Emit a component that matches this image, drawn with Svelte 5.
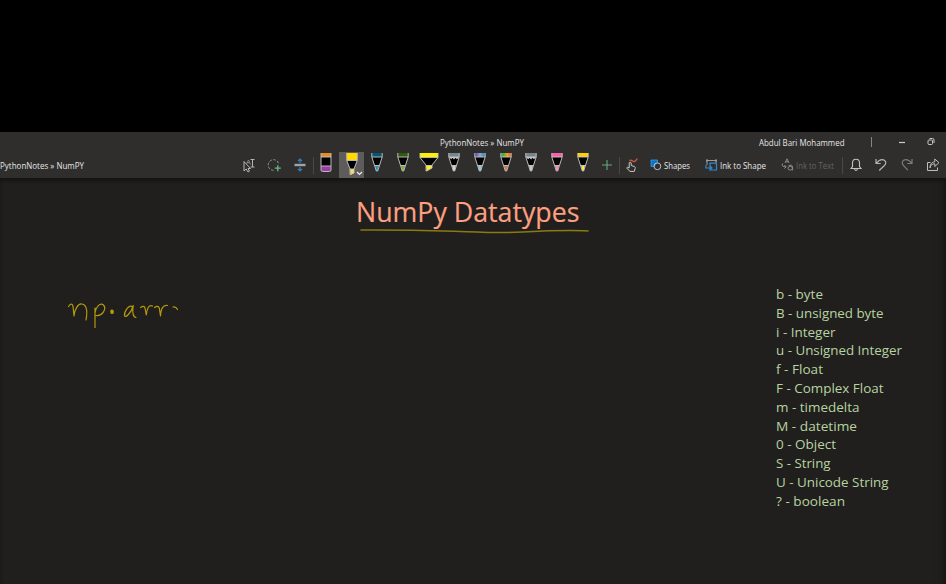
<script>
  const pens = [
    { kind: 'eraser' },
    { kind: 'marker', color: '#ffd800', tip: '#f3df46', selected: true },
    { kind: 'pen', color: '#075574', tip: '#2b95b5' },
    { kind: 'pen', color: '#30590a', tip: '#84ad35' },
    { kind: 'wide', color: '#fff000', tip: '#ffef20' },
    { kind: 'pencil', color: '#74858d', tip: '#d5d5d5' },
    { kind: 'pen', color: 'url(#galaxy)', tip: '#8acbd9' },
    { kind: 'pen', color: 'url(#rainbow)', tip: '#df7954' },
    { kind: 'pencil', color: '#74858d', tip: '#c2c8ca' },
    { kind: 'pen', color: '#fb5eaa', tip: '#ff86b8' },
    { kind: 'pen', color: '#ffd000', tip: '#ffe34b' }
  ];
  const types = [
    ['b - byte', 47], ['B - unsigned byte', 107.5], ['i - Integer', 59.5],
    ['u - Unsigned Integer', 126], ['f - Float', 47], ['F - Complex Float', 107.5],
    ['m - timedelta', 83.5], ['M - datetime', 81], ['0 - Object', 60],
    ['S - String', 54.5], ['U - Unicode String', 112.5], ['? - boolean', 69]
  ];
</script>

{#snippet label(text, width, height, baseline)}
  <svg class="label" {width} {height}><text x="0" y={baseline} textLength={width} lengthAdjust="spacingAndGlyphs">{text}</text></svg>
{/snippet}

{#snippet penIcon(pen)}
  <svg width="20" height="24" viewBox="0 0 20 24">
    {#if pen.kind === 'eraser'}
      <path d="M5 1H15V5H5Z" fill="#e98b23" /><path d="M5.2 5H14.8V14H5.2Z" fill="#000" />
      <path d="M5.2 14H14.8V18Q14.8 19.3 13.5 19.3H6.5Q5.2 19.3 5.2 18Z" fill="#9b3caa" />
      <path d="M5 1V18Q5 19.5 6.5 19.5H13.5Q15 19.5 15 18V1M5 5H15M5 14H15" class="outline" />
    {:else if pen.kind === 'marker'}
      <path d="M4.8 1H15.2V8H4.8Z" fill={pen.color} /><path d="M5 8.5H15L12 17H8Z" fill="#000" />
      <path d="M8 17H12V21L8.6 23Z" fill={pen.tip} />
      <path d="M4.8 1V8.5L8 17V22.5L12 21V17L15.2 8.5V1M5 8.5H15M8 17H12" class="outline" />
    {:else if pen.kind === 'wide'}
      <path d="M1 1H19V5H1Z" fill={pen.color} /><path d="M1.3 5.5H18.7L13 13H7Z" fill="#000" />
      <path d="M7 13.5H13V16L7.5 19.5Z" fill={pen.tip} />
      <path d="M1 1V5.5L7 13V19L13 16V13L19 5.5V1M1 5.5H19M7 13.5H13" class="outline" />
    {:else}
      <path d="M4.8 1H15.2V5H4.8Z" fill={pen.color} />
      <path d="M5 5H15L12 13.5H8Z" fill="#000" />
      {#if pen.kind === 'pencil'}
        <path d="M5 5L7.2 7.2L8.5 5.8L10 7.6L11.5 5.8L13 7.2L15 5Z" fill="#c8c8c8" />
      {/if}
      <path d="M8 13.5H12L10.6 19H9.4Z" fill={pen.tip} />
      <path d="M4.8 1V5L9.3 19H10.7L15.2 5V1M5 5H15M8 13.5H12" class="outline" />
    {/if}
  </svg>
{/snippet}

<main>
  <svg class="defs" width="0" height="0">
    <linearGradient id="galaxy"><stop offset="0" stop-color="#5c3a93" /><stop offset=".5" stop-color="#8ba5df" /><stop offset="1" stop-color="#297fa3" /></linearGradient>
    <linearGradient id="rainbow"><stop offset="0" stop-color="#289963" /><stop offset=".35" stop-color="#6fae34" /><stop offset=".65" stop-color="#f0a01c" /><stop offset="1" stop-color="#e45430" /></linearGradient>
  </svg>
  <header>
    <div class="titlebar">
      <div class="doc">{@render label('PythonNotes » NumPY', 84, 14, 10.4)}</div>
      <div class="user">{@render label('Abdul Bari Mohammed', 85.5, 14, 10.4)}</div>
      <i class="divider short"></i>
      <svg class="minimize" width="8" height="10"><path d="M1 5.5H7" stroke="#ccc" stroke-width="1.2" /></svg>
      <svg class="restore" width="10" height="10" fill="none" stroke="#c7c7c7"><rect x="2" y="3" width="4.5" height="4.5" rx="1" /><path d="M3.5 1.5H6.5Q8 1.5 8 3V6" /></svg>
    </div>
    <div class="toolbar">
      <div class="crumb">{@render label('PythonNotes » NumPY', 84, 14, 10.5)}</div>
      <div class="slot"><svg width="16" height="16" fill="none" stroke="#b5b5b5"><path d="M3 4.5V14L5.2 12L7 15L8.4 14.2L7 11.5H9.5Z" /><path d="M5.5 7L7.5 3L9.5 7.5M6.2 5.7H8.8" stroke="#858585" /><path d="M9.5 2.5H13.5M11.5 2.5V10M9.5 10H13.5" /></svg></div>
      <div class="slot"><svg width="16" height="16" fill="none"><circle cx="7.5" cy="8" r="5.3" stroke="#949494" stroke-dasharray="2.6 1.4" /><path d="M8 7H15.5V15H8Z" fill="#2f2e2d" /><path d="M11.8 8.2V14.2M8.8 11.2H14.8" stroke="#67bd82" stroke-width="1.3" /></svg></div>
      <div class="slot"><svg width="14" height="16" fill="none"><path d="M7 2V6M5 4L7 2L9 4M7 10V14M5 12L7 14L9 12" stroke="#2d80c6" stroke-width="1.2" /><path d="M1.5 8H12.5" stroke="#a2a2a2" stroke-width="2.4" /></svg></div>
      <i class="divider"></i>
      <div class="pens">
        {#each pens as pen}
          <div class="pen" class:selected={pen.selected}>
            {@render penIcon(pen)}
            {#if pen.selected}<svg class="chevron" width="7" height="5"><path d="M1 1L3.5 3.5L6 1" fill="none" stroke="#eee" stroke-width="1.2" /></svg>{/if}
          </div>
        {/each}
      </div>
      <div class="plus"><svg width="12" height="12"><path d="M6 1V11M1 6H11" stroke="#65a87c" stroke-width="1.1" /></svg></div>
      <i class="divider"></i>
      <div class="touch"><svg width="14" height="16" fill="none"><path d="M4.2 11V5.8Q5.2 4.5 6.2 5.8V8.5L9.5 9.5Q10.6 10 10.2 11.4L9.3 14.4H5L1.6 11Q2 9.5 4.2 11Z" stroke="#c9c9c9" /><path d="M4.5 3.8C6.5 1.4 7.5 5.4 9.8 4.4C12 3.4 10.5 2.4 12.5 1.9" stroke="#d95743" stroke-width="1.2" /></svg></div>
      <div class="command shapes">
        <svg width="12" height="14" fill="none"><path d="M1 2H7.5V5Q4.5 5.5 4.5 8.5H1Z" fill="#0875cc" stroke="#4a9ddd" stroke-width=".7" /><circle cx="7.4" cy="8.3" r="3.4" stroke="#b8c2ca" /></svg>
        {@render label('Shapes', 26, 14, 10.5)}
      </div>
      <div class="command ink-shape">
        <svg width="13" height="14" fill="none"><path d="M2 7V2.5H11V5" stroke="#999" /><path d="M1 1.5H3V3.5H1ZM10 1.5H12V3.5H10Z" fill="#999" /><path d="M5 5.2H11.5V12H5Z" stroke="#3987c6" stroke-width="1.2" /><path d="M.9 7V10H7M5 8L7 10L5 12" stroke="#2e85cf" stroke-width="1.2" /></svg>
        {@render label('Ink to Shape', 46, 14, 10.5)}
      </div>
      <div class="command ink-text">
        <svg width="13" height="14" fill="none" stroke="#8b8b8b"><path d="M4 5L6 .8L8 5M4.6 3.8H7.4M1.5 5.5Q0 9 5 8.8M3.4 7L5.2 8.8L3.4 10.6" /><ellipse cx="9.2" cy="10.2" rx="2.2" ry="1.9" /><path d="M7.7 7.4Q11.6 6.2 11.6 9V12.4" /></svg>
        {@render label('Ink to Text', 38, 14, 10.5)}
      </div>
      <i class="divider"></i>
      <div class="tail"><svg width="14" height="16" fill="none" stroke="#c2c2c2" stroke-width="1.1"><path d="M2 11.5L3.5 9.5V6Q3.5 2.2 7 2.2Q10.5 2.2 10.5 6V9.5L12 11.5ZM5.5 12Q7 15 8.5 12" /></svg></div>
      <div class="tail"><svg width="14" height="16" fill="none" stroke="#b5b5b5" stroke-width="1.2"><path d="M2 2V6.5H6.7M2.2 6.3Q6.5 1.2 10.4 3.3Q13.3 5.5 10.2 8.8L5.2 13.5" /></svg></div>
      <div class="tail"><svg width="14" height="16" fill="none" stroke="#7d7d7d" stroke-width="1.2"><path d="M12 2V6.5H7.3M11.8 6.3Q7.5 1.2 3.6 3.3Q.7 5.5 3.8 8.8L7.8 13.2" /></svg></div>
      <div class="tail share"><svg width="14" height="16" fill="none" stroke="#bdbdbd"><path d="M4.5 5.5H1.5V13.5H11.5V10.5M4 11Q4.5 6.8 8.8 6.8V9.5L13 5.7L8.8 2V4.7Q4 5.4 4 11Z" /></svg></div>
      <i class="divider"></i>
    </div>
  </header>
  <section class="canvas">
    <h1>{@render label('NumPy Datatypes', 223.5, 40, 29.3)}</h1>
    <ul>
      {#each types as [text, width]}
        <li>{@render label(text, width, 18.8, 14)}</li>
      {/each}
    </ul>
    <svg class="ink" width="946" height="406" viewBox="0 178 946 406">
      <path d="M361 230C410 229.5 440 231 477 232C505 233.5 518 232.5 543 231C562 230.5 575 230 588 231" stroke="#8c7a10" stroke-width="1.5" />
      <path d="M68.5 306.5Q71.5 302 73 306L74 316C74.5 310 78 303 82 304C87 305 87.5 312 86 320M95 308L95 327.5M95 313C95.5 307 100 302.5 103.5 305C107 309 102 316.5 96 315.5" />
      <path d="M112 311.2l.1 1" stroke-width="3.6" />
      <path d="M132.5 307C129 303.5 124 312 124.5 315.5C125.5 319 131.5 312 133.3 305.5C132 312 133 317 136 317.5M140.5 307.5Q144 305 145 308L146.3 315C147 308.5 149 304 152.5 306M154.5 307.5Q158 305 159.3 308L160.5 316C161 308.5 163 304.5 167.5 305.5M173 307Q176 306.5 177.5 309.5" />
    </svg>
  </section>
</main>

<style>
  :global(body) { background: #000; overflow: hidden; }
  main { width: 946px; height: 584px; padding-top: 132px; box-sizing: border-box; background: #000; font-family: "Open Sans", sans-serif; }
  svg { display: block; flex: none; }
  .defs { position: absolute; }
  header { height: 46px; background: #2f2e2d; color: #e5e5e5; font-size: 8.4px; }
  .label { overflow: visible; }
  .label text { fill: currentColor; }
  .titlebar { height: 20px; display: flex; align-items: center; }
  .doc { margin-left: 440px; padding-top: 2px; }
  .user { margin-left: 235px; padding-top: 2px; }
  .divider { width: 1px; height: 17px; background: #494847; flex: none; }
  .divider.short { height: 10px; background: #858585; margin-left: 26.5px; }
  .minimize { margin-left: 26px; }
  .restore { margin-left: 19.5px; }
  .toolbar { height: 26px; display: flex; align-items: center; overflow: hidden; }
  .crumb { width: 236px; box-sizing: border-box; flex: none; }
  .slot { width: 25.6px; flex: none; display: flex; justify-content: center; }
  .pens { display: flex; height: 26px; flex: none; margin-left: -.7px; }
  .pen { width: 25.68px; height: 26px; position: relative; display: flex; justify-content: center; box-sizing: border-box; }
  .selected { background: #5d5c5b; }
  .chevron { position: absolute; right: 1px; bottom: 2px; }
  .outline { fill: none; stroke: #c6c6c6; stroke-width: .9; }
  .plus { width: 23.2px; flex: none; display: flex; justify-content: center; }
  .touch { width: 25px; flex: none; display: flex; justify-content: center; }
  .command { display: flex; align-items: center; flex: none; gap: 2px; }
  .shapes { margin-left: 5.5px; width: 54.5px; }
  .ink-shape { width: 76px; }
  .ink-text { width: 61px; color: #646362; }
  .tail { width: 25.8px; flex: none; display: flex; justify-content: center; }
  .canvas { position: relative; height: 406px; background: #211f1e; box-shadow: inset 0 3px 3px #151413, inset -10px 0 10px -8px #171615; overflow: hidden; }
  h1 { margin: 15px 0 0 356px; color: #fca080; font-weight: 400; height: 40px; font-size: 26.8px; }
  h1 :global(text) { stroke: currentColor; stroke-width: .15; }
  ul { list-style: none; margin: 52px 0 0 775.6px; padding: 0; color: #b6d3a0; font-size: 13.4px; }
  li { height: 18.8px; }
  .ink { position: absolute; left: 0; top: 0; fill: none; stroke: #b39a0b; stroke-width: 1.2; stroke-linecap: round; stroke-linejoin: round; }
</style>
